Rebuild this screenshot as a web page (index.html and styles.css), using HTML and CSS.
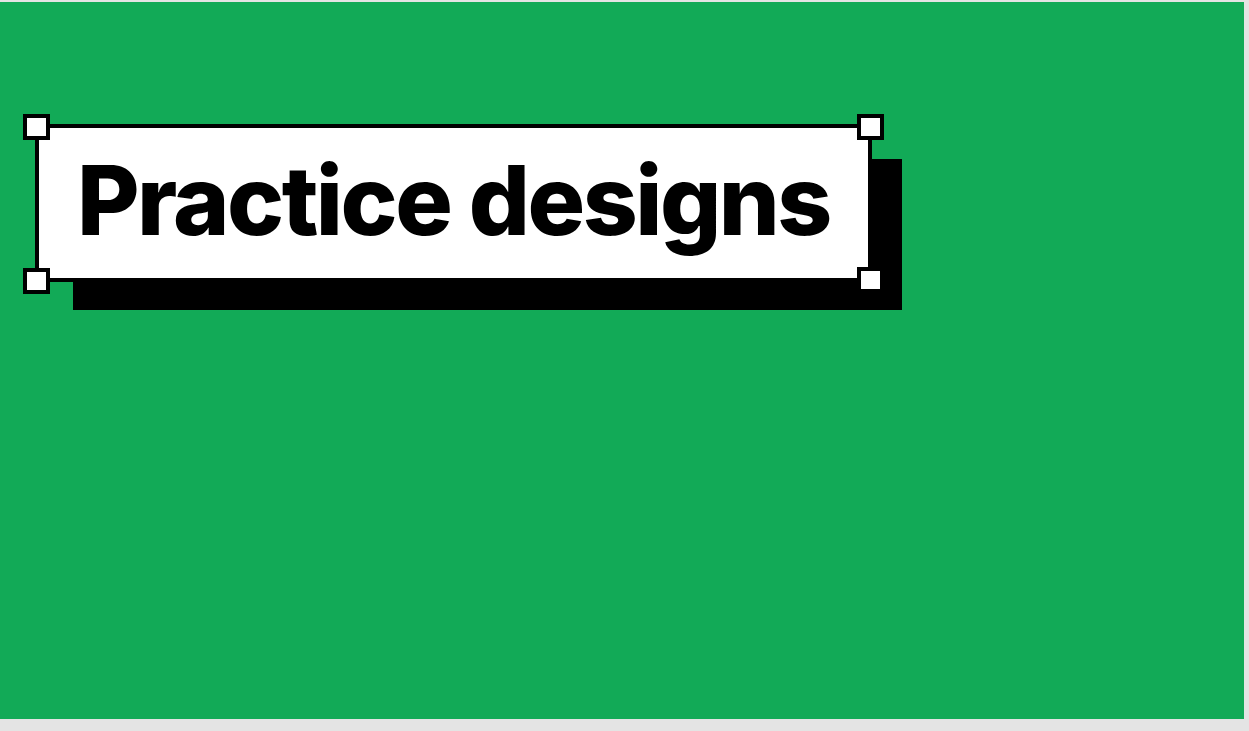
FILE: index.html
```html
<!DOCTYPE html>
<html>
<head>
<meta charset="utf-8">
<link rel="stylesheet" href="styles.css">
<title>Practice designs</title>
</head>
<body>
<main class="canvas">
  <div class="title-wrap">
    <div class="title-box">
      <h1 class="title">Practice designs</h1>
      <span class="handle handle-tl"></span>
      <span class="handle handle-tr"></span>
      <span class="handle handle-bl"></span>
      <span class="handle handle-br"></span>
    </div>
  </div>
</main>
</body>
</html>
```
FILE: styles.css
```css
html, body {
  margin: 0;
  padding: 0;
}
body {
  background: #e4e4e4;
  width: 1249px;
  height: 731px;
  overflow: hidden;
}
.canvas {
  margin-top: 2px;
  width: 1244px;
  height: 717px;
  background: #12aa57;
  padding: 122px 0 0 35px;
  box-sizing: border-box;
}
.title-wrap {
  position: relative;
  width: 837px;
}
.title-wrap::before {
  content: "";
  position: absolute;
  left: 38px;
  top: 35px;
  width: 829px;
  height: 151px;
  background: #000;
}
.title-box {
  position: relative;
  box-sizing: border-box;
  width: 837px;
  height: 158px;
  border: 4px solid #000;
  background: #fff;
  padding: 0 0 0 38px;
}
.title {
  margin: 0;
  font-family: Inter, "Liberation Sans", sans-serif;
  font-weight: 800;
  font-size: 96px;
  letter-spacing: -2.5px;
  line-height: 144px;
  color: #000;
  white-space: nowrap;
}
.handle {
  position: absolute;
  box-sizing: border-box;
  width: 27px;
  height: 26px;
  background: #fff;
  border: 4px solid #000;
}
.handle-tl { left: -16px; top: -14px; }
.handle-tr { right: -16px; top: -14px; }
.handle-bl { left: -16px; bottom: -16px; }
.handle-br { right: -16px; bottom: -15px; }
```
